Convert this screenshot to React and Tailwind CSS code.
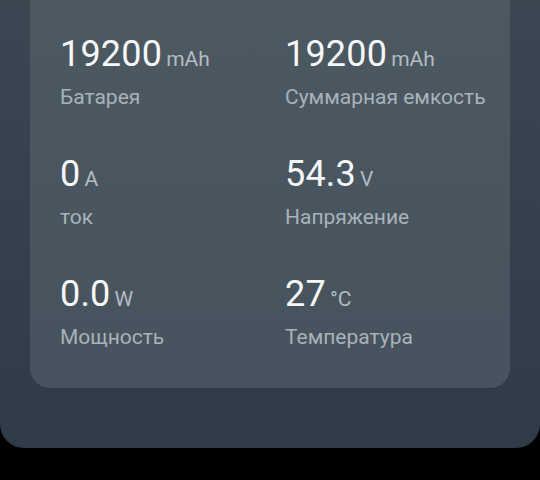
export default function App() {
  const items = [
    { v: "19200", u: "mAh", l: "Батарея" },
    { v: "19200", u: "mAh", l: "Суммарная емкость" },
    { v: "0", u: "A", l: "ток" },
    { v: "54.3", u: "V", l: "Напряжение" },
    { v: "0.0", u: "W", l: "Мощность" },
    { v: "27", u: "°C", l: "Температура" },
  ];
  return (
    <div className="h-[480px] w-[540px] overflow-hidden bg-black" style={{ fontFamily: "Roboto, 'Noto Sans', sans-serif" }}>
      <div className="-mt-[40px] rounded-b-[24px] bg-gradient-to-b from-[#3b4751] to-[#2f3b49] px-[30px] pt-[23px] pb-[60px]">
        <div className="rounded-[20px] bg-gradient-to-b from-[#4c5961] to-[#46535e] pl-[30px] pt-[52.7px] pb-[39px] shadow-[0_1px_0_rgba(0,0,0,0.08)]">
          <div className="grid grid-cols-[225px_225px] gap-y-[46.9px]">
            {items.map((it, i) => (
              <div key={i} className="flex flex-col">
                <div className="flex h-[36px] items-baseline overflow-visible">
                  <span className="text-[36px] leading-[36px] tracking-[0.2px] text-[#f5f7f8]">{it.v}</span>
                  <span className="ml-[4px] text-[21px] leading-[36px] text-[#b3bbc1]">{it.u}</span>
                </div>
                <div className="mt-[13.1px] h-[24px] text-[21px] leading-[24px] text-[#a9b2b9] whitespace-nowrap">{it.l}</div>
              </div>
            ))}
          </div>
        </div>
      </div>
    </div>
  );
}
